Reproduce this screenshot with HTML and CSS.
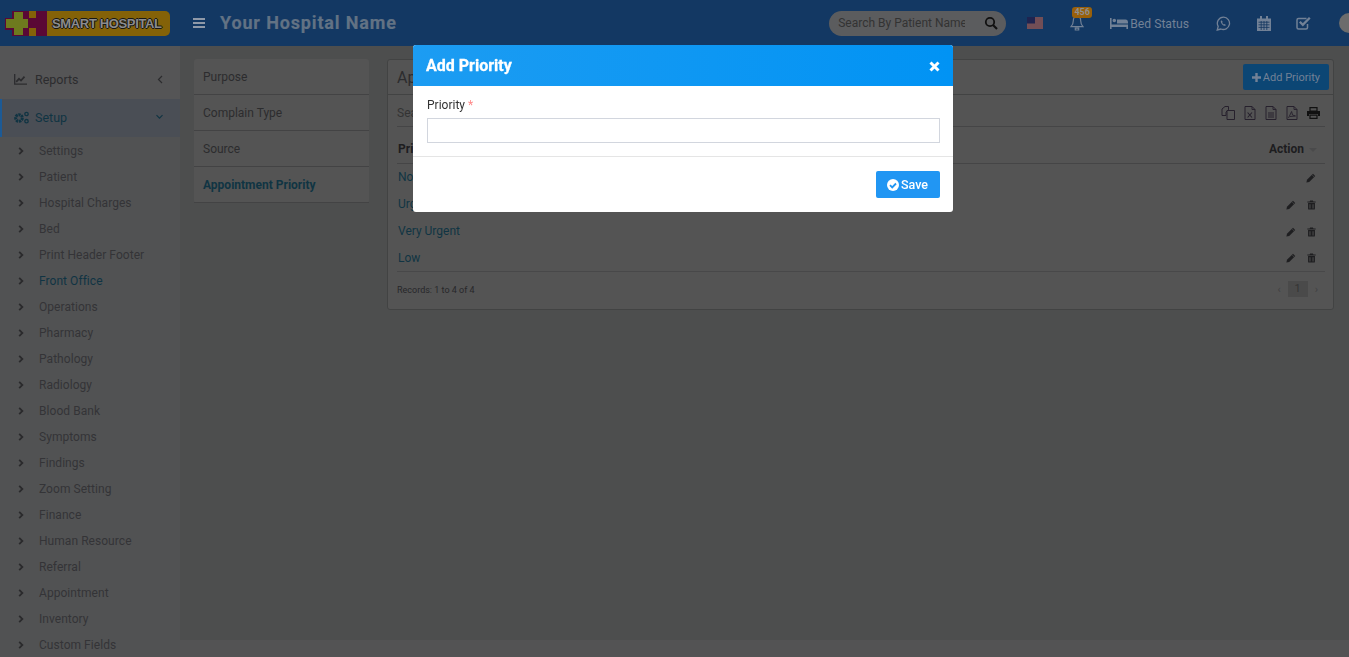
FILE: index.html
```html
<!DOCTYPE html>
<html lang="en">
<head>
    <meta charset="UTF-8">
    <title>Smart Hospital</title>
    <link rel="stylesheet" href="styles.css">
</head>
<body>
    <svg class="defs" width="0" height="0">
        <symbol id="chev" viewBox="0 0 8 10"><path d="M1.600 0.800 L5.800 5 L1.600 9.200" fill="none" stroke="currentColor" stroke-width="2.400"/></symbol>
        <symbol id="pencil" viewBox="0 0 12 12"><path d="M0.500 11.500 L1.200 8.200 L8.400 1 L11 3.600 L3.800 10.800 Z" fill="currentColor"/><path d="M7.400 2.400l2.200 2.200" stroke="#58595a" stroke-width=".7"/></symbol>
        <symbol id="trash" viewBox="0 0 10 11"><path d="M3.500 0.500h3l.6 1.200H9.600v1.100H.4V1.700h2.500ZM1.200 3.400h7.600v6.200q0 1-1 1H2.200q-1 0-1-1ZM2.800 4.600v4.800h1V4.600ZM6.200 4.600v4.800h1V4.600Z" fill="currentColor" fill-rule="evenodd"/></symbol>
        <symbol id="doc" viewBox="0 0 12 14"><path d="M1 .5h7l3 3v10H1Z" fill="none" stroke="currentColor"/><path d="M8 .5v3h3" fill="none" stroke="currentColor" stroke-width=".9"/></symbol>
    </svg>

    <header class="topbar">
        <div class="logo">
            <svg class="logo-mark" width="42" height="25" viewBox="0 0 42 25">
                <path d="M0 7h7V0h35v25H7v-6H0Z" fill="#5a0835"/>
                <path d="M1 8h8V1h9v7h5v9h-5v7H9v-7H1Z" fill="#6e7a1e"/>
                <path d="M24 0h7v7h-7ZM24 17h7v8h-7Z" fill="#846208"/>
            </svg>
            <span class="logo-text">SMART HOSPITAL</span>
        </div>
        <svg class="menu-icon" width="12" height="10" viewBox="0 0 12 10"><path d="M0 0h12v2H0ZM0 4h12v2H0ZM0 8h12v2H0Z" fill="currentColor"/></svg>
        <div class="hospital-name">Your Hospital Name</div>
        <div class="top-right">
            <div class="search-box">
                <input class="search-input" type="text" placeholder="Search By Patient Name">
                <svg width="14" height="14" viewBox="0 0 14 14"><circle cx="6" cy="6" r="4.200" fill="none" stroke="#111" stroke-width="1.800"/><path d="M9 9l4 4" stroke="#111" stroke-width="2.200"/></svg>
            </div>
            <svg class="flag" width="16" height="12" viewBox="0 0 16 12">
                <rect width="16" height="12" fill="#808082"/>
                <path d="M0 1h16M0 3h16M0 5h16M0 7h16M0 9h16M0 11h16" stroke="#641c2a" stroke-width="1"/>
                <rect width="8" height="6.500" fill="#1f2450"/>
            </svg>
            <div class="bell">
                <svg width="14" height="16" viewBox="0 0 14 16"><path d="M7 1.200c2.600 0 3.700 2 3.700 4.500 0 3.200 1 4.600 2.300 6H1c1.300-1.400 2.300-2.800 2.300-6C3.300 3.200 4.400 1.200 7 1.200ZM5.300 13.200h3.400v1.800H5.300Z" fill="none" stroke="currentColor" stroke-width="1.200"/></svg>
                <span class="badge">456</span>
            </div>
            <div class="bed">
                <svg width="18" height="11" viewBox="0 0 18 11"><path d="M0 0h1.600v6.500H18V11h-1.600V9H1.600v2H0ZM2.500 2.500a1.800 1.800 0 1 1 3.600 0 1.800 1.800 0 1 1-3.600 0ZM7 1.500h8.500Q18 1.500 18 4.500V5.500H7Z" fill="currentColor"/></svg>
                <span>Bed Status</span>
            </div>
            <svg class="top-icon whatsapp" width="15" height="15" viewBox="0 0 15 15"><path d="M7.600 1.100a6.200 6.200 0 0 0-5.400 9.300L1.200 14l3.700-1a6.200 6.200 0 1 0 2.700-11.900Z" fill="none" stroke="currentColor" stroke-width="1.300"/><path d="M5.300 4.300c-1 1 -.6 2.500.7 3.900 1.400 1.500 3 2 4 1.100l-1.200-1.300-.9.500c-.7-.3-1.400-1-1.700-1.800l.5-.9Z" fill="currentColor"/></svg>
            <svg class="top-icon calendar" width="14" height="15" viewBox="0 0 14 15"><path d="M0 2.500h14V15H0Z M3 0h2v3.500H3ZM9 0h2v3.500H9Z" fill="currentColor"/><path d="M1.500 6.200h11M1.500 8.800h11M1.500 11.400h11M4.200 5v9M7 5v9M9.800 5v9" stroke="#133660" stroke-width=".8"/></svg>
            <svg class="top-icon check" width="15" height="14" viewBox="0 0 15 14"><path d="M11.500 8v3.500q0 1.500-1.500 1.500H2.500Q1 13 1 11.500V4q0-1.500 1.500-1.500h8" fill="none" stroke="currentColor" stroke-width="1.500"/><path d="M3.800 5.800l3 3 7-7" fill="none" stroke="currentColor" stroke-width="2.300"/></svg>
            <div class="avatar"></div>
        </div>
    </header>

    <div class="page">
        <aside class="sidebar">
            <div class="side-item reports">
                <svg class="side-icon" width="13" height="11" viewBox="0 0 13 11"><path d="M.7 0v10.200H13" fill="none" stroke="currentColor" stroke-width="1.300"/><path d="M2.200 7.800L5 4.800l2 1.800 3.500-4" fill="none" stroke="currentColor" stroke-width="1.700"/></svg>
                <span>Reports</span>
                <svg class="side-caret" width="6" height="9" viewBox="0 0 6 9"><path d="M5 1L1.500 4.500 5 8" fill="none" stroke="currentColor" stroke-width="1.200"/></svg>
            </div>
            <div class="side-item setup">
                <svg class="side-icon" width="15" height="13" viewBox="0 0 15 13"><circle cx="5" cy="7" r="3.300" fill="none" stroke="currentColor" stroke-width="3" stroke-dasharray="2.200 .7"/><circle cx="12.500" cy="3" r="1.700" fill="none" stroke="currentColor" stroke-width="1.300"/><circle cx="12.500" cy="10.200" r="1.700" fill="none" stroke="currentColor" stroke-width="1.300"/></svg>
                <span>Setup</span>
                <svg class="side-caret" width="7" height="6" viewBox="0 0 7 6"><path d="M.5 1.200l3 3 3-3" fill="none" stroke="currentColor" stroke-width="1.100"/></svg>
            </div>
            <ul class="sub-menu">
                <li><svg width="6" height="8"><use href="#chev"/></svg>Settings</li>
                <li><svg width="6" height="8"><use href="#chev"/></svg>Patient</li>
                <li><svg width="6" height="8"><use href="#chev"/></svg>Hospital Charges</li>
                <li><svg width="6" height="8"><use href="#chev"/></svg>Bed</li>
                <li><svg width="6" height="8"><use href="#chev"/></svg>Print Header Footer</li>
                <li class="active"><svg width="6" height="8"><use href="#chev"/></svg>Front Office</li>
                <li><svg width="6" height="8"><use href="#chev"/></svg>Operations</li>
                <li><svg width="6" height="8"><use href="#chev"/></svg>Pharmacy</li>
                <li><svg width="6" height="8"><use href="#chev"/></svg>Pathology</li>
                <li><svg width="6" height="8"><use href="#chev"/></svg>Radiology</li>
                <li><svg width="6" height="8"><use href="#chev"/></svg>Blood Bank</li>
                <li><svg width="6" height="8"><use href="#chev"/></svg>Symptoms</li>
                <li><svg width="6" height="8"><use href="#chev"/></svg>Findings</li>
                <li><svg width="6" height="8"><use href="#chev"/></svg>Zoom Setting</li>
                <li><svg width="6" height="8"><use href="#chev"/></svg>Finance</li>
                <li><svg width="6" height="8"><use href="#chev"/></svg>Human Resource</li>
                <li><svg width="6" height="8"><use href="#chev"/></svg>Referral</li>
                <li><svg width="6" height="8"><use href="#chev"/></svg>Appointment</li>
                <li><svg width="6" height="8"><use href="#chev"/></svg>Inventory</li>
                <li><svg width="6" height="8"><use href="#chev"/></svg>Custom Fields</li>
            </ul>
        </aside>

        <main class="content">
            <nav class="left-menu">
                <a>Purpose</a>
                <a>Complain Type</a>
                <a>Source</a>
                <a class="current">Appointment Priority</a>
            </nav>
            <section class="card">
                <div class="card-head">
                    <h3>Appointment Priority List</h3>
                    <button class="add-btn"><svg width="9" height="9" viewBox="0 0 9 9"><path d="M3.300 0h2.400v3.300H9v2.400H5.700V9H3.300V5.700H0V3.300h3.300Z" fill="currentColor"/></svg>Add Priority</button>
                </div>
                <div class="card-body">
                    <div class="tools">
                        <span>Search...</span>
                        <div class="tool-icons">
                            <svg width="14" height="14" viewBox="0 0 14 14"><path d="M1 3L4 .5h3.500v3L5 6v3.500H1ZM7.500 3.500L5 6M6 4.500h7.500v9H6Z" fill="none" stroke="currentColor"/></svg>
                            <svg width="12" height="14" viewBox="0 0 12 14"><use href="#doc" width="12" height="14"/><path d="M3.600 6.500l4.400 5M8 6.500l-4.400 5" stroke="currentColor" stroke-width="1.100"/></svg>
                            <svg width="12" height="14" viewBox="0 0 12 14"><use href="#doc" width="12" height="14"/><path d="M3 7h6M3 9h6M3 11h6" stroke="currentColor"/></svg>
                            <svg width="12" height="14" viewBox="0 0 12 14"><use href="#doc" width="12" height="14"/><path d="M2.500 12L5.600 5.500 6.500 9 9.500 10 4 10.500" fill="none" stroke="currentColor" stroke-width=".9"/></svg>
                            <svg width="13" height="12" viewBox="0 0 13 12"><path d="M3 .6h7v3.400H3Z" fill="none" stroke="#111" stroke-width="1.200"/><path d="M0 4h13v5h-2V7H2v2H0Z" fill="#111"/><path d="M3 8.100h7v3.300H3Z" fill="none" stroke="#111" stroke-width="1.200"/></svg>
                        </div>
                    </div>
                    <div class="thead">
                        <span>Priority</span>
                        <span class="action-head">Action<i class="sort"></i></span>
                    </div>
                    <div class="trow"><a>Normal</a><div class="acts"><svg width="10" height="10"><use href="#pencil"/></svg></div></div>
                    <div class="trow"><a>Urgent</a><div class="acts"><svg width="10" height="10"><use href="#pencil"/></svg><svg width="9" height="10"><use href="#trash"/></svg></div></div>
                    <div class="trow"><a>Very Urgent</a><div class="acts"><svg width="10" height="10"><use href="#pencil"/></svg><svg width="9" height="10"><use href="#trash"/></svg></div></div>
                    <div class="trow last"><a>Low</a><div class="acts"><svg width="10" height="10"><use href="#pencil"/></svg><svg width="9" height="10"><use href="#trash"/></svg></div></div>
                    <div class="tfoot">
                        <span>Records: 1 to 4 of 4</span>
                        <div class="pager"><span>‹</span><b>1</b><span>›</span></div>
                    </div>
                </div>
            </section>
        </main>
    </div>

    <div class="modal">
        <div class="modal-head">
            <h4>Add Priority</h4>
            <svg width="11" height="11" viewBox="0 0 11 11"><path d="M1.500 1.500l8 8M9.500 1.500l-8 8" stroke="#fff" stroke-width="3"/></svg>
        </div>
        <div class="modal-body">
            <label>Priority <span class="req">*</span></label>
            <input type="text">
        </div>
        <div class="modal-foot">
            <button class="save-btn">
                <svg width="12" height="12" viewBox="0 0 12 12"><circle cx="6" cy="6" r="6" fill="#fff"/><path d="M3 6.200l2.200 2.200L9 4.500" fill="none" stroke="#2196f3" stroke-width="1.800"/></svg>Save
            </button>
        </div>
    </div>
</body>
</html>
```
FILE: styles.css
```css
* {
    box-sizing: border-box;
}

html, body {
    height: 100%;
}

body {
    margin: 0;
    height: 657px;
    overflow: hidden;
    font-family: Roboto, "Liberation Sans", sans-serif;
    font-size: 12px;
    color: #2c2c2e;
    background-color: #535354;
}

.defs {
    position: absolute;
}

/* top bar */
.topbar {
    display: flex;
    align-items: center;
    height: 46px;
    background-color: #133863;
    color: #728196;
}

.logo {
    display: flex;
    align-items: center;
    width: 165px;
    height: 25px;
    margin-left: 5px;
}

.logo-mark {
    flex: none;
}

.logo-text {
    flex: 1;
    height: 25px;
    padding-left: 5px;
    border-radius: 0 5px 5px 0;
    background-color: #846208;
    font-family: "Liberation Sans", sans-serif;
    font-size: 13px;
    font-weight: bold;
    line-height: 25px;
    letter-spacing: -0.35px;
    color: #8c8c8c;
    text-shadow: 1px 0 0 #161616, -1px 0 0 #161616, 0 1px 0 #161616, 0 -1px 0 #161616;
}

.menu-icon {
    margin-left: 23px;
    color: #8f99a8;
}

.hospital-name {
    margin-left: 15px;
    margin-bottom: 2px;
    font-size: 18px;
    font-weight: bold;
    letter-spacing: 0.85px;
    color: #627284;
    -webkit-text-stroke: 0.2px #627284;
}

.top-right {
    display: flex;
    align-items: center;
    margin-left: auto;
    margin-right: -10px;
}

.search-box {
    display: flex;
    align-items: center;
    width: 177px;
    height: 25px;
    padding-left: 9px;
    border-radius: 13px;
    background-color: #5b5c5e;
}

.search-input {
    width: 127px;
    margin-right: 19px;
    padding: 0;
    border: none;
    outline: none;
    background: transparent;
    font-family: inherit;
    font-size: 12px;
}

.search-input::placeholder {
    color: #333;
    opacity: 1;
}

.flag {
    margin-left: 21px;
}

.bell {
    position: relative;
    display: flex;
    margin-left: 27px;
}

.badge {
    position: absolute;
    top: -8px;
    left: 2px;
    width: 20px;
    height: 11px;
    border-radius: 3px;
    background-color: #99600a;
    color: #8f8f8f;
    font-size: 9px;
    font-weight: bold;
    line-height: 11px;
    text-align: center;
}

.bed {
    display: flex;
    align-items: center;
    gap: 2px;
    margin-left: 26px;
    margin-top: 1px;
    font-size: 12.2px;
}

.top-icon.whatsapp {
    margin-left: 27px;
}

.top-icon.calendar {
    margin-left: 26px;
}

.top-icon.check {
    margin-left: 25px;
}

.avatar {
    flex: none;
    width: 20px;
    height: 20px;
    margin-left: 28px;
    border-radius: 50%;
    background-color: #6c6c6c;
}

/* page */
.page {
    display: flex;
    height: 594px;
    background-color: #4d4e4e;
}

.sidebar {
    flex: none;
    width: 180px;
    height: 611px;
    background-color: #515253;
}

.side-item {
    display: flex;
    align-items: center;
    padding: 0 17px 0 14px;
    font-size: 12.5px;
}

.side-icon {
    flex: none;
    margin-right: 8px;
}

.side-item span {
    flex: 1;
}

.side-item.reports {
    height: 53px;
    padding-top: 14px;
    background-color: #555556;
}

.side-item.setup {
    height: 38px;
    padding-left: 12px;
    padding-bottom: 2px;
    border-left: 2px solid #1c5a96;
    background-color: #4a4e55;
    color: #103443;
}

.setup .side-icon {
    margin-right: 6px;
}

.sub-menu {
    margin: 1px 0 0;
    padding: 0;
    list-style: none;
}

.sub-menu li {
    display: flex;
    align-items: center;
    height: 26px;
    padding-left: 18px;
    letter-spacing: 0.05px;
    color: #343437;
}

.sub-menu li svg {
    flex: none;
    margin-right: 15px;
    color: #2a2a2c;
}

.sub-menu li.active {
    color: #103443;
}

/* content */
.content {
    display: flex;
    flex: 1;
    align-items: flex-start;
    gap: 18px;
    padding: 13px 15px 0 14px;
}

.left-menu {
    display: flex;
    flex-direction: column;
    flex: none;
    width: 175px;
    border-radius: 3px;
    background-color: #545454;
}

.left-menu a {
    display: flex;
    align-items: center;
    height: 36px;
    padding-left: 9px;
    border-bottom: 1px solid #434344;
    color: #2c2c2e;
}

.left-menu a.current {
    font-weight: bold;
    color: #103443;
}

.card {
    flex: 1;
    height: 251px;
    border: 1px solid #424343;
    border-radius: 3px;
    background-color: #545454;
}

.card-head {
    display: flex;
    align-items: center;
    justify-content: space-between;
    height: 35px;
    padding: 0 4px 0 9px;
    border-bottom: 1px solid #424343;
}

.card-head h3 {
    margin: 0;
    font-size: 16px;
    font-weight: normal;
    color: #2c2c2e;
}

.add-btn {
    display: flex;
    align-items: center;
    gap: 2px;
    height: 26px;
    padding: 0 9px;
    border: none;
    border-radius: 2px;
    background-color: #0c4674;
    color: #728196;
    font-family: inherit;
    font-size: 11px;
}

.card-body {
    padding: 0 8px 0 9px;
}

.tools {
    display: flex;
    align-items: center;
    justify-content: space-between;
    height: 32px;
    padding-top: 4px;
    border-bottom: 1px solid #454546;
    color: #333;
}

.tool-icons {
    display: flex;
    align-items: center;
    gap: 9px;
    padding-right: 5px;
    color: #26202c;
}

.thead {
    display: flex;
    align-items: center;
    justify-content: space-between;
    height: 37px;
    padding-left: 1px;
    padding-top: 8px;
    border-bottom: 1px solid #454546;
    font-weight: bold;
    color: #1d1d1f;
}

.action-head {
    display: flex;
    align-items: center;
    padding-right: 8px;
}

.sort {
    width: 0;
    height: 0;
    margin: 2px 0 0 5px;
    border-left: 4px solid transparent;
    border-right: 4px solid transparent;
    border-top: 4px solid #4a4a4b;
}

.trow {
    display: flex;
    align-items: center;
    justify-content: space-between;
    height: 27px;
    padding-left: 1px;
    color: #103443;
}

.trow a {
    margin-bottom: 1px;
}

.trow.last {
    border-bottom: 1px solid #484849;
}

.acts {
    display: flex;
    gap: 11px;
    padding-right: 9px;
    color: #1e1e20;
}

.tfoot {
    display: flex;
    align-items: center;
    justify-content: space-between;
    height: 36px;
    font-size: 9px;
    color: #27272a;
}

.pager {
    display: flex;
    align-items: center;
    gap: 7px;
    margin-bottom: 2px;
    padding-right: 7px;
    font-size: 11px;
    color: #414142;
}

.pager b {
    width: 20px;
    height: 16px;
    background-color: #4a4a4a;
    color: #343434;
    font-weight: normal;
    line-height: 16px;
    text-align: center;
}

/* modal over the dimmed page */
.modal {
    position: fixed;
    top: 45px;
    left: 413px;
    width: 540px;
    height: 167px;
    border-radius: 3px;
    overflow: hidden;
    background-color: #fff;
}

.modal-head {
    display: flex;
    align-items: center;
    justify-content: space-between;
    height: 41px;
    padding: 0 13px;
    background: linear-gradient(to right, #1c9cf2, #0193f4);
}

.modal-head h4 {
    margin: 0;
    font-size: 16px;
    font-weight: bold;
    color: #fff;
    -webkit-text-stroke: 0.3px #fff;
}

.modal-head svg {
    margin-top: 2px;
}

.modal-body {
    height: 71px;
    padding: 12px 13px 0 14px;
    border-bottom: 1px solid #e5e5e5;
}

.modal-body label {
    display: block;
    margin-bottom: 5px;
    font-size: 12px;
    line-height: 15px;
    color: #333;
}

.req {
    color: #f88;
}

.modal-body input {
    display: block;
    width: 100%;
    height: 25px;
    border: 1px solid #d2d6de;
    outline: none;
}

.modal-foot {
    display: flex;
    justify-content: flex-end;
    padding: 14px 13px 0 0;
}

.save-btn {
    display: flex;
    align-items: center;
    justify-content: center;
    gap: 2px;
    width: 64px;
    height: 27px;
    padding: 0 1px 0 0;
    border: none;
    border-radius: 2px;
    background-color: #2196f3;
    color: #fff;
    font-family: inherit;
    font-size: 12.5px;
    font-weight: 500;
}
```
